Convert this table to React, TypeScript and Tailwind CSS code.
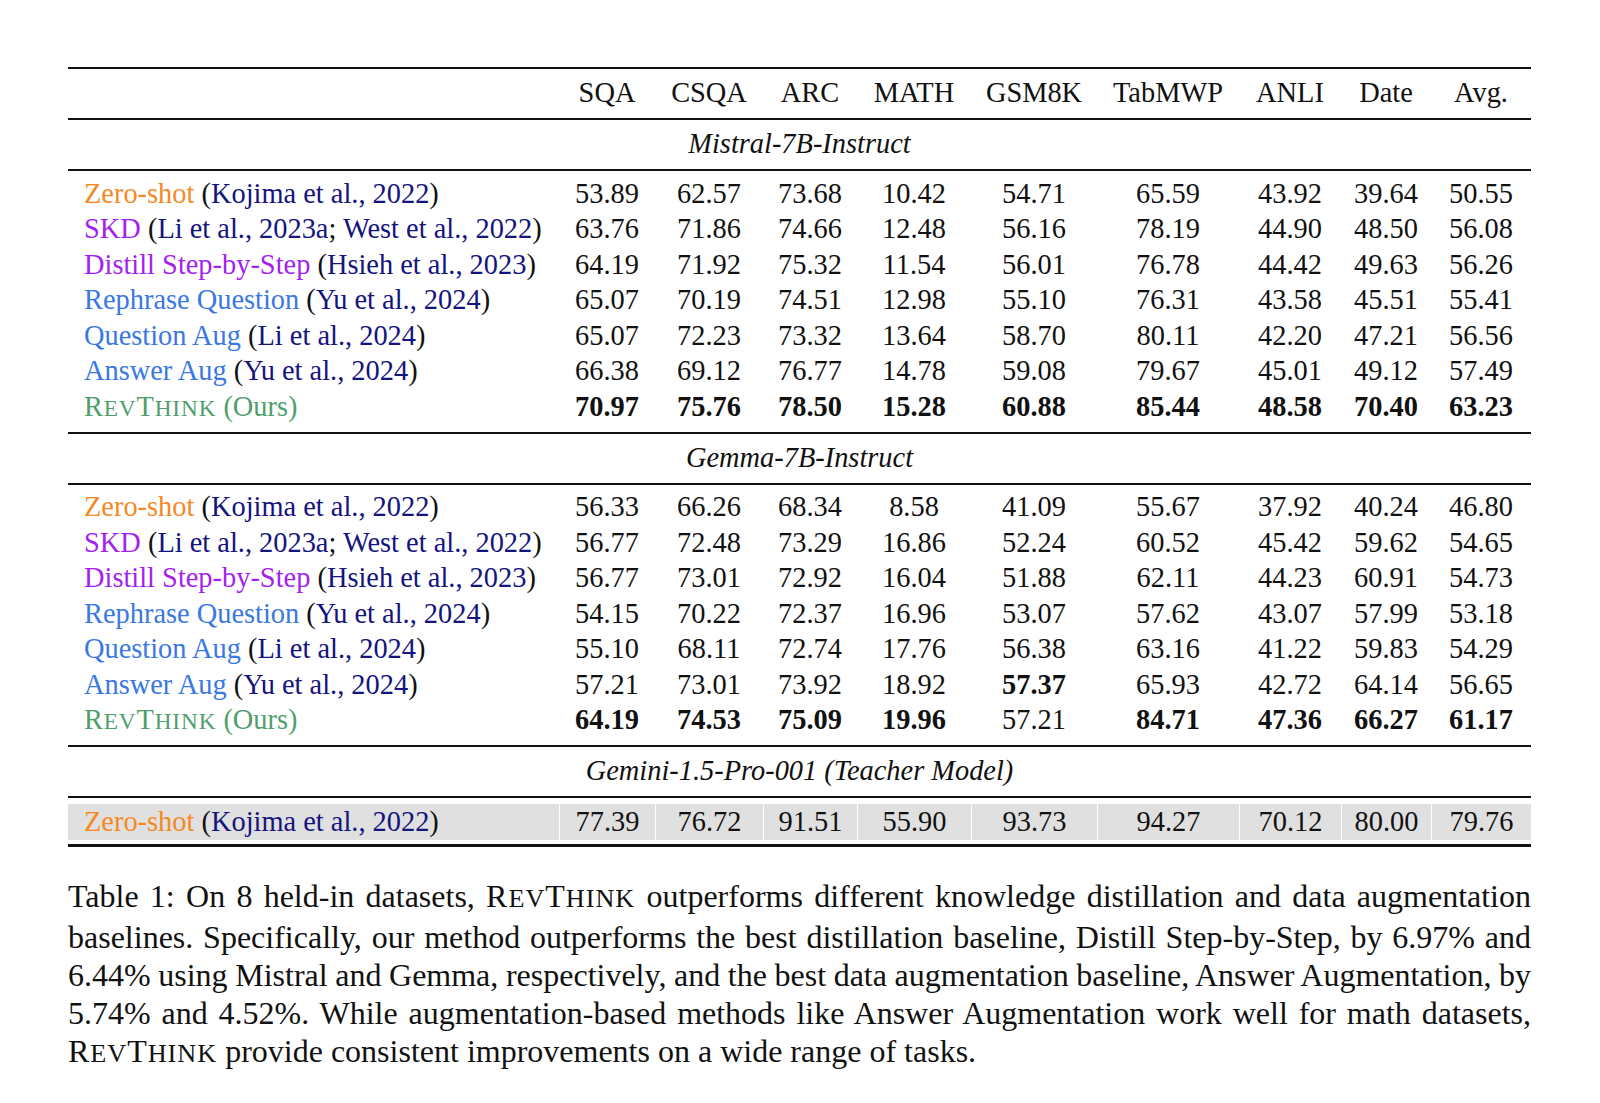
import React from "react";

const GRID =
  "grid grid-cols-[491px_96px_108px_94px_114px_126px_142px_102px_90px_100px]";

const ORANGE = "text-[#f5891f]";
const PURPLE = "text-[#a51ff0]";
const BLUE = "text-[#3a78e3]";
const GREEN = "text-[#4f9e6c]";
const NAVY = "text-[#14147f]";

type Method = { name: React.ReactNode; color: string; cite: string[] };

const methods: Method[] = [
  { name: "Zero-shot", color: ORANGE, cite: ["Kojima et al., 2022"] },
  { name: "SKD", color: PURPLE, cite: ["Li et al., 2023a", "West et al., 2022"] },
  { name: "Distill Step-by-Step", color: PURPLE, cite: ["Hsieh et al., 2023"] },
  { name: "Rephrase Question", color: BLUE, cite: ["Yu et al., 2024"] },
  { name: "Question Aug", color: BLUE, cite: ["Li et al., 2024"] },
  { name: "Answer Aug", color: BLUE, cite: ["Yu et al., 2024"] },
];

const headers = ["SQA", "CSQA", "ARC", "MATH", "GSM8K", "TabMWP", "ANLI", "Date", "Avg."];

const mistral: string[][] = [
  ["53.89", "62.57", "73.68", "10.42", "54.71", "65.59", "43.92", "39.64", "50.55"],
  ["63.76", "71.86", "74.66", "12.48", "56.16", "78.19", "44.90", "48.50", "56.08"],
  ["64.19", "71.92", "75.32", "11.54", "56.01", "76.78", "44.42", "49.63", "56.26"],
  ["65.07", "70.19", "74.51", "12.98", "55.10", "76.31", "43.58", "45.51", "55.41"],
  ["65.07", "72.23", "73.32", "13.64", "58.70", "80.11", "42.20", "47.21", "56.56"],
  ["66.38", "69.12", "76.77", "14.78", "59.08", "79.67", "45.01", "49.12", "57.49"],
  ["70.97", "75.76", "78.50", "15.28", "60.88", "85.44", "48.58", "70.40", "63.23"],
];
const mistralBold: boolean[][] = [
  [], [], [], [], [], [],
  [true, true, true, true, true, true, true, true, true],
];

const gemma: string[][] = [
  ["56.33", "66.26", "68.34", "8.58", "41.09", "55.67", "37.92", "40.24", "46.80"],
  ["56.77", "72.48", "73.29", "16.86", "52.24", "60.52", "45.42", "59.62", "54.65"],
  ["56.77", "73.01", "72.92", "16.04", "51.88", "62.11", "44.23", "60.91", "54.73"],
  ["54.15", "70.22", "72.37", "16.96", "53.07", "57.62", "43.07", "57.99", "53.18"],
  ["55.10", "68.11", "72.74", "17.76", "56.38", "63.16", "41.22", "59.83", "54.29"],
  ["57.21", "73.01", "73.92", "18.92", "57.37", "65.93", "42.72", "64.14", "56.65"],
  ["64.19", "74.53", "75.09", "19.96", "57.21", "84.71", "47.36", "66.27", "61.17"],
];
const gemmaBold: boolean[][] = [
  [], [], [], [], [],
  [false, false, false, false, true],
  [true, true, true, true, false, true, true, true, true],
];

function RevThink() {
  return (
    <span className="tracking-[0.03em]">
      R<span className="text-[0.82em]">EV</span>T<span className="text-[0.82em]">HINK</span>
    </span>
  );
}

function Label({ m }: { m: Method }) {
  return (
    <div className="pl-4 whitespace-nowrap">
      <span className={m.color}>{m.name}</span>{" "}
      <span>(</span>
      {m.cite.map((c, i) => (
        <React.Fragment key={i}>
          {i > 0 && <span>; </span>}
          <span className={NAVY}>{c}</span>
        </React.Fragment>
      ))}
      <span>)</span>
    </div>
  );
}

function Section({
  title,
  data,
  bold,
}: {
  title: string;
  data: string[][];
  bold: boolean[][];
}) {
  return (
    <>
      <div className="h-[49px] flex items-center justify-center italic">{title}</div>
      <div className="h-[2px] bg-[#111]" />
      <div className="pt-[5px] pb-[7px]">
        {data.map((row, r) => (
          <div key={r} className={`${GRID} h-[35.5px] items-center`}>
            {r < 6 ? (
              <Label m={methods[r]} />
            ) : (
              <div className={`pl-4 whitespace-nowrap ${GREEN}`}>
                <RevThink /> (Ours)
              </div>
            )}
            {row.map((v, c) => (
              <div key={c} className={`text-center ${bold[r]?.[c] ? "font-bold" : ""}`}>
                {v}
              </div>
            ))}
          </div>
        ))}
      </div>
      <div className="h-[2px] bg-[#111]" />
    </>
  );
}

export default function App() {
  const teacher = ["77.39", "76.72", "91.51", "55.90", "93.73", "94.27", "70.12", "80.00", "79.76"];
  const lines: React.ReactNode[] = [
    <>Table 1: On 8 held-in datasets, <RevThink /> outperforms different knowledge distillation and data augmentation</>,
    <>baselines. Specifically, our method outperforms the best distillation baseline, Distill Step-by-Step, by 6.97% and</>,
    <>6.44% using Mistral and Gemma, respectively, and the best data augmentation baseline, Answer Augmentation, by</>,
    <>5.74% and 4.52%. While augmentation-based methods like Answer Augmentation work well for math datasets,</>,
  ];
  return (
    <div className="w-[1600px] h-[1103px] bg-white text-[#111] font-['Liberation_Serif',serif] text-[28.4px] leading-none">
      <div className="pt-[67px] pl-[68px] w-[1531px]">
        <div className="w-[1463px]">
          <div className="h-[2px] bg-[#111]" />
          <div className={`${GRID} h-[49px] items-center`}>
            <div />
            {headers.map((h) => (
              <div key={h} className="text-center">
                {h}
              </div>
            ))}
          </div>
          <div className="h-[2px] bg-[#111]" />
          <Section title="Mistral-7B-Instruct" data={mistral} bold={mistralBold} />
          <Section title="Gemma-7B-Instruct" data={gemma} bold={gemmaBold} />
          <div className="h-[49px] flex items-center justify-center italic">
            Gemini-1.5-Pro-001 (Teacher Model)
          </div>
          <div className="h-[2px] bg-[#111]" />
          <div className="pt-[6px] pb-[4px]">
            <div className={`${GRID} h-[36px] items-stretch bg-[#e0e0e0]`}>
              <div className="flex items-center">
                <Label m={methods[0]} />
              </div>
              {teacher.map((v, c) => (
                <div key={c} className="flex items-center justify-center border-l border-white">
                  {v}
                </div>
              ))}
            </div>
          </div>
          <div className="h-[3px] bg-[#111]" />

          <div className="mt-[30px] text-[32px] leading-[38.1px]">
            {lines.map((l, i) => (
              <div
                key={i}
                className="whitespace-nowrap text-justify [text-align-last:justify] [word-spacing:-2px]"
              >
                {l}
              </div>
            ))}
            <div className="whitespace-nowrap">
              <RevThink /> provide consistent improvements on a wide range of tasks.
            </div>
          </div>
        </div>
      </div>
    </div>
  );
}
